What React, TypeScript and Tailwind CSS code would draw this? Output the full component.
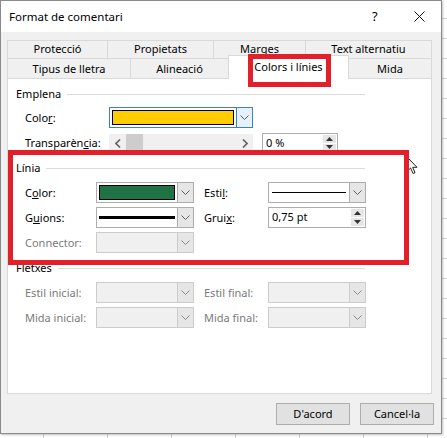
import React from "react";

const FONT = "font-['Noto_Sans',sans-serif]";

function Chevron({ color = "#606060" }: { color?: string }) {
  return (
    <svg width="9" height="5" viewBox="0 0 9 5">
      <path d="M0.5 0.5 L4.5 4.5 L8.5 0.5" fill="none" stroke={color} strokeWidth="1" />
    </svg>
  );
}

function SideArrow({ dir }: { dir: "left" | "right" }) {
  return (
    <svg width="6" height="9" viewBox="0 0 6 9">
      <path
        d={dir === "left" ? "M5 0.5 L1 4.5 L5 8.5" : "M1 0.5 L5 4.5 L1 8.5"}
        fill="none"
        stroke="#606060"
        strokeWidth="1.6"
      />
    </svg>
  );
}

function Tri({ up }: { up?: boolean }) {
  return (
    <svg width="7" height="4" viewBox="0 0 7 4">
      <path d={up ? "M0 4 L3.5 0 L7 4 Z" : "M0 0 L3.5 4 L7 0 Z"} fill="#333" />
    </svg>
  );
}

type Kind = "normal" | "focused" | "disabled";

function Combo({
  width,
  kind = "normal",
  children,
}: {
  width: string;
  kind?: Kind;
  children?: React.ReactNode;
}) {
  const outer =
    kind === "focused"
      ? "border-[#3f80c0] bg-white"
      : kind === "disabled"
      ? "border-[#cccccc] bg-[#f0f0f0]"
      : "border-[#adadad] bg-white";
  const arrow =
    kind === "focused"
      ? "bg-[#e5f1fb] border-[#3f80c0]"
      : kind === "disabled"
      ? "bg-[#e6e6e6] border-[#cccccc]"
      : "bg-[#e6e6e6] border-[#adadad]";
  return (
    <div className={`${width} h-[21px] flex border ${outer}`}>
      <div className="flex-1 p-[2px] flex items-center">{children}</div>
      <div className={`w-[16px] border-l flex items-center justify-center ${arrow}`}>
        <Chevron color={kind === "disabled" ? "#8a8a8a" : "#606060"} />
      </div>
    </div>
  );
}

function Spin({ width, value, height = "h-[21px]" }: { width: string; value: string; height?: string }) {
  return (
    <div className={`${width} ${height} flex border border-[#adadad] bg-white`}>
      <div className="flex-1 pl-[3px] flex items-center text-[11px] text-black">{value}</div>
      <div className="w-[15px] flex flex-col p-px gap-px">
        <div className="flex-1 bg-[#e6e6e6] flex items-center justify-center">
          <Tri up />
        </div>
        <div className="flex-1 bg-[#e6e6e6] flex items-center justify-center">
          <Tri />
        </div>
      </div>
    </div>
  );
}

function Header({ text }: { text: string }) {
  return (
    <div className="w-[349px] h-[16px] flex items-center gap-[6px]">
      <span className="text-[11px] leading-[16px] text-black">{text}</span>
      <div className="flex-1 h-px bg-[#dcdcdc]" />
    </div>
  );
}

function Label({
  width,
  children,
  muted,
}: {
  width: string;
  children: React.ReactNode;
  muted?: boolean;
}) {
  return (
    <div className={`${width} text-[11px] leading-[16px] ${muted ? "text-[#7a7a7a]" : "text-black"}`}>
      {children}
    </div>
  );
}

function Tab({ w, label, cls = "" }: { w: string; label: string; cls?: string }) {
  return (
    <div
      className={`${w} border-t border-l border-[#d9d9d9] bg-[#f0f0f0] flex items-center justify-center text-[11px] text-black ${cls}`}
    >
      {label}
    </div>
  );
}

function CloseIcon() {
  return (
    <svg width="11" height="11" viewBox="0 0 11 11">
      <path d="M0.5 0.5 L10.5 10.5 M10.5 0.5 L0.5 10.5" stroke="#111" strokeWidth="1" />
    </svg>
  );
}

function Cursor() {
  return (
    <svg width="12" height="18" viewBox="0 0 12 18">
      <path
        d="M0.5 0.5 L0.5 14 L3.6 11 L6 16.5 L8 15.6 L5.7 10.3 L10 10.3 Z"
        fill="#ffffff"
        stroke="#222"
        strokeWidth="1"
        strokeLinejoin="round"
      />
    </svg>
  );
}

export default function App() {
  return (
    <div
      className={`relative w-[447px] h-[438px] overflow-hidden bg-white ${FONT} bg-[linear-gradient(to_right,#d6d6d6_1px,transparent_1px),linear-gradient(to_bottom,#d6d6d6_1px,transparent_1px)] bg-[length:64px_20px] bg-[position:43px_18px]`}
    >
      {/* dialog window */}
      <div className="relative w-[442px] h-[434px] border border-[#8a8a8a] bg-[#f0f0f0] flex flex-col shadow-[1px_1px_2px_rgba(0,0,0,0.25)]">
        {/* title bar */}
        <div className="h-[31px] bg-white flex items-center pl-[8px]">
          <span className="text-[11.5px] text-black">Format de comentari</span>
          <div className="flex-1" />
          <span className="text-[13px] text-black w-[10px] mr-[32px]">?</span>
          <div className="mr-[16px] flex items-center">
            <CloseIcon />
          </div>
        </div>

        <div className="flex-1 pl-[6px] pt-[8px] flex flex-col">
          {/* back tab row */}
          <div className="flex h-[18px] w-[425px]">
            <Tab w="w-[100px]" label="Protecció" />
            <Tab w="w-[106px]" label="Propietats" />
            <Tab w="w-[92px]" label="Marges" />
            <Tab w="w-[127px]" label="Text alternatiu" cls="border-r" />
          </div>
          {/* front tab row */}
          <div className="flex h-[20px] w-[425px] items-end">
            <Tab w="w-[123px] h-[20px] pt-[2px]" label="Tipus de lletra" />
            <Tab w="w-[98px] h-[20px] pt-[2px]" label="Alineació" />
            <div className="relative z-10 w-[121px] h-[24px] -mb-px border-t border-l border-r border-[#d9d9d9] bg-white flex items-center justify-center text-[11px] text-black">
              Colors i línies
            </div>
            <Tab w="w-[83px] h-[20px] pt-[2px] border-l-0" label="Mida" cls="border-r" />
          </div>

          {/* tab page */}
          <div className="w-[425px] h-[316px] border border-[#d9d9d9] bg-white pl-[8px] pt-[7px] flex flex-col">
            <Header text="Emplena" />
            <div className="pl-[9px] mt-[5px] flex items-center">
              <Label width="w-[84px]">
                Colo<u>r</u>:
              </Label>
              <Combo width="w-[144px]" kind="focused">
                <div className="w-full h-[15px] border border-black bg-[#ffcc00]" />
              </Combo>
            </div>
            <div className="pl-[9px] mt-[5px] flex items-center">
              <Label width="w-[84px]">
                Transparèn<u>c</u>ia:
              </Label>
              <div className="w-[144px] h-[19px] bg-[#f0f0f0] flex items-center">
                <div className="w-[17px] h-full flex items-center justify-center">
                  <SideArrow dir="left" />
                </div>
                <div className="w-[17px] h-full bg-[#cdcdcd]" />
                <div className="flex-1" />
                <div className="w-[17px] h-full flex items-center justify-center">
                  <SideArrow dir="right" />
                </div>
              </div>
              <div className="ml-[9px]">
                <Spin width="w-[76px]" value="0 %" height="h-[20px]" />
              </div>
            </div>

            <div className="mt-[7px]">
              <Header text="Línia" />
            </div>
            <div className="pl-[9px] mt-[6px] flex flex-col gap-[4px]">
              <div className="flex items-center">
                <Label width="w-[71px]">
                  C<u>o</u>lor:
                </Label>
                <Combo width="w-[98px]">
                  <div className="w-full h-[15px] border border-black bg-[#217346]" />
                </Combo>
                <Label width="w-[64px] ml-[10px]">
                  Esti<u>l</u>:
                </Label>
                <Combo width="w-[98px]">
                  <div className="w-full px-[1px]">
                    <div className="h-px bg-black" />
                  </div>
                </Combo>
              </div>
              <div className="flex items-center">
                <Label width="w-[71px]">
                  G<u>u</u>ions:
                </Label>
                <Combo width="w-[98px]">
                  <div className="w-full h-[3px] bg-black" />
                </Combo>
                <Label width="w-[64px] ml-[10px]">
                  Grui<u>x</u>:
                </Label>
                <Spin width="w-[98px]" value="0,75 pt" />
              </div>
              <div className="flex items-center">
                <Label width="w-[71px]" muted>
                  Connector:
                </Label>
                <Combo width="w-[98px]" kind="disabled" />
              </div>
            </div>

            <div className="mt-[7px]">
              <Header text="Fletxes" />
            </div>
            <div className="pl-[9px] mt-[6px] flex flex-col gap-[4px]">
              <div className="flex items-center">
                <Label width="w-[71px]" muted>
                  Estil inicial:
                </Label>
                <Combo width="w-[98px]" kind="disabled" />
                <Label width="w-[64px] ml-[10px]" muted>
                  Estil final:
                </Label>
                <Combo width="w-[98px]" kind="disabled" />
              </div>
              <div className="flex items-center">
                <Label width="w-[71px]" muted>
                  Mida inicial:
                </Label>
                <Combo width="w-[98px]" kind="disabled" />
                <Label width="w-[64px] ml-[10px]" muted>
                  Mida final:
                </Label>
                <Combo width="w-[98px]" kind="disabled" />
              </div>
            </div>
          </div>

          {/* dialog buttons */}
          <div className="w-[427px] mt-[9px] flex justify-end gap-[10px]">
            <button className="w-[74px] h-[22px] border border-[#adadad] bg-[#e1e1e1] text-[11px] text-black">
              D'acord
            </button>
            <button className="w-[74px] h-[22px] border border-[#adadad] bg-[#e1e1e1] text-[11px] text-black">
              Cancel·la
            </button>
          </div>
        </div>

        {/* highlight frames */}
        <div className="absolute left-[247px] top-[53px] w-[83px] h-[33px] border-[5px] border-[#e3202a] z-20" />
        <div className="absolute left-[7px] top-[149px] w-[401px] h-[115px] border-[5px] border-[#e3202a] z-20" />
      </div>

      {/* mouse pointer */}
      <div className="absolute left-[407px] top-[157px]">
        <Cursor />
      </div>
    </div>
  );
}
